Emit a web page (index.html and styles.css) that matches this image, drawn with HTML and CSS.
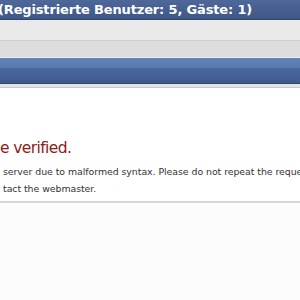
FILE: index.html
```html
<!DOCTYPE html>
<html>
<head>
<meta charset="utf-8">
<link rel="stylesheet" href="styles.css">
</head>
<body>
<div class="topbar"><span class="stats">(Registrierte Benutzer: 5, Gäste: 1)</span></div>
<div class="navlight"></div>
<div class="navgrey"></div>
<div class="bluebar"><div class="blue-hi"></div><div class="blue-lo"></div></div>
<div class="under"></div>
<main class="content">
  <h1 class="err">e verified.</h1>
  <p class="msg">server due to malformed syntax. Please do not repeat the request without modifications.</p>
  <p class="msg">tact the webmaster.</p>
</main>
<div class="rule"></div>
<div class="footer"></div>
</body>
</html>
```
FILE: styles.css
```css
html, body { margin: 0; padding: 0; background: #fff; overflow: hidden; }
body { width: 300px; height: 300px; font-family: "DejaVu Sans", Verdana, sans-serif; }
.topbar {
  height: 19px;
  background: linear-gradient(#4d6899, #3e5787);
  border-bottom: 1px solid #2f4670;
  color: #fff;
  white-space: nowrap;
  overflow: hidden;
}
.stats {
  display: block;
  margin-left: -2px;
  font-weight: bold;
  font-size: 13px;
  line-height: 19px;
  letter-spacing: -0.15px;
}
.navlight { height: 20px; background: #e9eae9; border-bottom: 1px solid #cfd0cf; }
.navgrey { height: 16px; background: #dcdddc; border-bottom: 1px solid #eeeeee; }
.bluebar { display: flex; flex-direction: column; border-bottom: 1px solid #2e446b; }
.blue-hi { height: 10px; background: linear-gradient(#6283b3, #587aab); }
.blue-lo { height: 15px; background: linear-gradient(#4a67a0, #3f5a8e); }
.under { height: 3px; background: #e3e4e3; border-bottom: 1px solid #c8c9c8; }
.content { padding: 51px 0 0 0; height: 113px; box-sizing: border-box; white-space: nowrap; overflow: hidden; }
.err { margin: 0 0 10px 0; font-size: 15.5px; font-weight: normal; color: #8c1c1c; line-height: 18px; letter-spacing: -0.6px; }
.msg { margin: 0 0 7px 3px; font-size: 9.4px; color: #333; line-height: 10px; letter-spacing: -0.05px; }
.rule { height: 2px; background: #d6d6d6; }
.footer { height: 100px; background: #fcfcfc; }
```
